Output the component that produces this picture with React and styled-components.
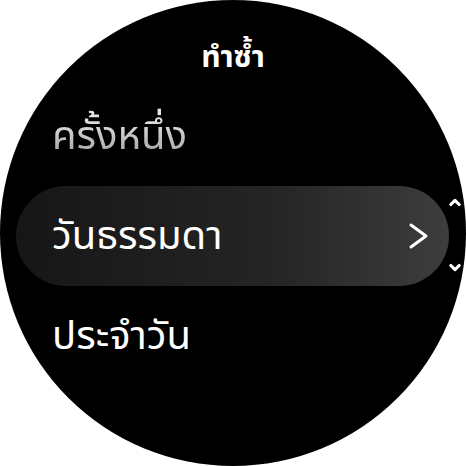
import styled, { createGlobalStyle } from "styled-components";

const Global = createGlobalStyle`
  html, body { margin: 0; padding: 0; background: #fff; }
  body { font-family: "Noto Sans", "Noto Sans Thai", sans-serif; }
`;

const Watch = styled.div`
  position: relative;
  width: 466px;
  height: 466px;
  border-radius: 50%;
  background: #000;
  overflow: hidden;
  display: flex;
  flex-direction: column;
  color: #fff;
`;

const Title = styled.div`
  height: 86px;
  display: flex;
  align-items: center;
  justify-content: center;
  padding-top: 30px;
  box-sizing: border-box;
  font-size: 30px;
  font-weight: 700;
`;

const List = styled.div`
  display: flex;
  flex-direction: column;
  padding: 0 17px 0 16px;
`;

const Row = styled.div`
  height: 100px;
  display: flex;
  align-items: center;
  justify-content: space-between;
  padding: 0 20px 0 36px;
  border-radius: 50px;
  font-size: 40px;
  background: ${({ $active }) =>
    $active ? "linear-gradient(90deg, #161616 0%, #252525 60%, #3d3d3d 100%)" : "transparent"};
`;

const Label = styled.span`
  ${({ $dim }) =>
    $dim
      ? `background: linear-gradient(180deg, #e4e4e4 20%, #9a9a9a 90%);
         -webkit-background-clip: text;
         background-clip: text;
         color: transparent;`
      : "color: #fff;"}
`;

const Scroll = styled.div`
  position: absolute;
  right: 1px;
  top: 192px;
  height: 86px;
  display: flex;
  flex-direction: column;
  justify-content: space-between;
`;

const Chevron = ({ d, size = 20 }) => (
  <svg width={size} height={size} viewBox="0 0 24 24" fill="none" stroke="#fff"
    strokeWidth="3.8" strokeLinecap="round" strokeLinejoin="round">
    <path d={d} />
  </svg>
);

export default function App() {
  return (
    <>
      <Global />
      <Watch>
        <Title>ทำซ้ำ</Title>
        <List>
          <Row>
            <Label $dim>ครั้งหนึ่ง</Label>
          </Row>
          <Row $active>
            <Label>วันธรรมดา</Label>
            <svg width="22" height="28" viewBox="0 0 22 28" fill="none" stroke="#fff"
              strokeWidth="3" strokeLinecap="round" strokeLinejoin="round">
              <path d="M4 3 L19 14 L4 25" />
            </svg>
          </Row>
          <Row>
            <Label>ประจำวัน</Label>
          </Row>
        </List>
        <Scroll>
          <Chevron d="M7 15 L12 10 L17 15" />
          <Chevron d="M7 9 L12 14 L17 9" />
        </Scroll>
      </Watch>
    </>
  );
}
